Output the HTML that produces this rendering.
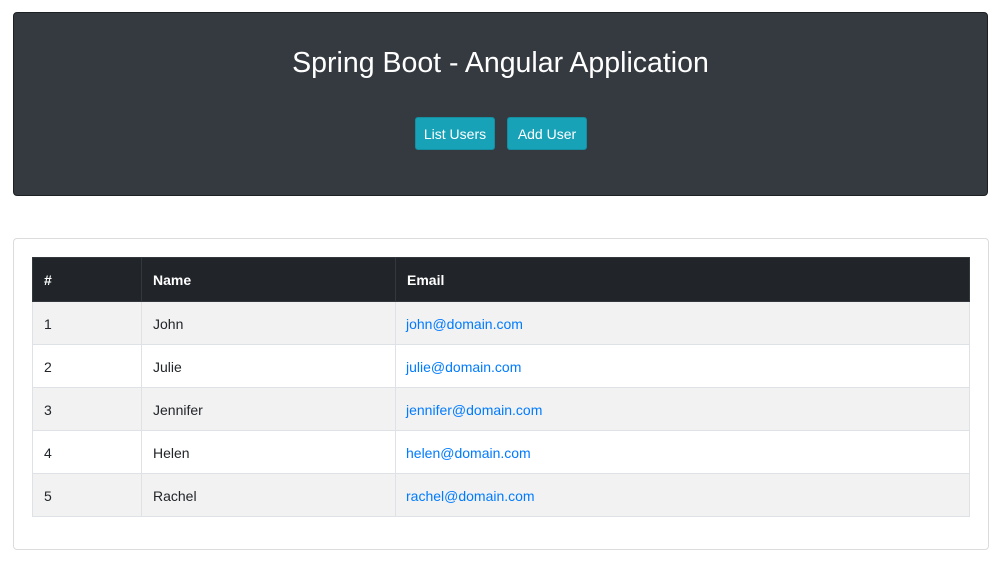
<!DOCTYPE html>
<html><head><meta charset="utf-8"><style>
*{box-sizing:border-box;margin:0;padding:0}
body{width:1000px;height:561px;background:#fff;font-family:"Liberation Sans",sans-serif;color:#212529;position:relative;overflow:hidden}
.hd{position:absolute;left:13px;top:12px;width:975px;height:184px;background:#343a40;border:1px solid #1d2124;border-radius:4px}
.hd h1{position:absolute;top:34px;left:0;right:0;text-align:center;color:#fff;font-weight:400;font-size:28.5px}
.btn{position:absolute;top:104px;height:33px;width:80px;background:#17a2b8;border:1px solid #148ea1;border-radius:3px;color:#fff;font-size:14px;line-height:32px;text-align:center}
.card{position:absolute;left:13px;top:238px;width:976px;height:312px;border:1px solid #dcdcdc;border-radius:4px}
table{position:absolute;left:18px;top:18px;width:938px;border-collapse:collapse;font-size:14px}
th,td{height:43px;padding:1px 11px 0;text-align:left;border:1px solid #dee2e6}
td:last-child{padding-left:10px}
th{background:#212529;color:#fff;border-color:#32383e;height:44px;font-size:14px}
tr:nth-child(even) td{background:#f2f2f2}
td a{color:#007bff;text-decoration:none;font-size:14px}
</style></head><body>
<div class="hd"><h1>Spring Boot - Angular Application</h1>
<div class="btn" style="left:401px">List Users</div>
<div class="btn" style="left:493px">Add User</div></div>
<div class="card"><table>
<tr><th style="width:109px">#</th><th style="width:254px">Name</th><th>Email</th></tr>
<tr><td>1</td><td>John</td><td><a>john@domain.com</a></td></tr>
<tr><td>2</td><td>Julie</td><td><a>julie@domain.com</a></td></tr>
<tr><td>3</td><td>Jennifer</td><td><a>jennifer@domain.com</a></td></tr>
<tr><td>4</td><td>Helen</td><td><a>helen@domain.com</a></td></tr>
<tr><td>5</td><td>Rachel</td><td><a>rachel@domain.com</a></td></tr>
</table></div>
</body></html>
